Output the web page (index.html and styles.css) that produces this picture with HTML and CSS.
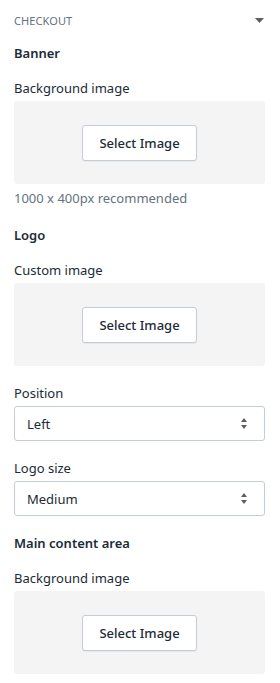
FILE: index.html
```html
<!doctype html>
<html lang="en">
<head>
  <meta charset="utf-8" />
  <meta name="viewport" content="width=device-width,initial-scale=1" />
  <title>Checkout settings</title>
  <link rel="stylesheet" href="styles.css">
</head>
<body>
  <div class="panel">
    <div class="panelHead">
      <span class="panelTitle">CHECKOUT</span>
      <svg class="caret" width="9" height="5" viewBox="0 0 9 5"><path d="M0 0h9L4.5 5z" fill="#5c5f62"/></svg>
    </div>

    <!-- Banner -->
    <h3 class="groupTitle">Banner</h3>
    <div class="field">
      <div class="label">Background image</div>
      <div class="imgPick"><button class="btn" type="button">Select Image</button></div>
      <div class="hint">1000 x 400px recommended</div>
    </div>

    <!-- Logo -->
    <h3 class="groupTitle">Logo</h3>
    <div class="field">
      <div class="label">Custom image</div>
      <div class="imgPick"><button class="btn" type="button">Select Image</button></div>
    </div>
    <div class="field">
      <div class="label">Position</div>
      <div class="select">
        <span>Left</span>
        <svg class="updown" width="6" height="11" viewBox="0 0 6 11"><path d="M3 0L6 4H0z M0 7h6L3 11z" fill="#5c5f62"/></svg>
      </div>
    </div>
    <div class="field">
      <div class="label">Logo size</div>
      <div class="select">
        <span>Medium</span>
        <svg class="updown" width="6" height="11" viewBox="0 0 6 11"><path d="M3 0L6 4H0z M0 7h6L3 11z" fill="#5c5f62"/></svg>
      </div>
    </div>

    <!-- Main content -->
    <h3 class="groupTitle">Main content area</h3>
    <div class="field">
      <div class="label">Background image</div>
      <div class="imgPick"><button class="btn" type="button">Select Image</button></div>
    </div>
  </div>
</body>
</html>
```

FILE: styles.css
```css
:root{
  --font: "Noto Sans", "Open Sans", Arial, sans-serif;
  --ink: #212b36;
  --muted: #637381;
  --line: #c4cdd5;
  --well: #f4f4f4;
}

*{ box-sizing:border-box }
body{ margin:0; font-family:var(--font); background:#fff; color:var(--ink); }

.panel{
  padding: 10px 15px 0 14px;
}

.panelHead{
  display:flex;
  align-items:center;
  justify-content:space-between;
  height:20px;
  padding-right:1px;
}
.panelTitle{
  font-size:11px;
  color: var(--muted);
  letter-spacing:.1px;
}
.caret{ display:block; }

.groupTitle{
  margin:17px 0 0 0;
  font-size:13px;
  line-height:20px;
  font-weight:600;
}
.panelHead + .groupTitle{ margin-top:13px; }

.field{ margin-top:15px; }
.field + .field{ margin-top:17px; }

.label{
  font-size:13px;
  line-height:20px;
  margin-bottom:3px;
}

.imgPick{
  height:83px;
  background: var(--well);
  border-radius:3px;
  display:flex;
  align-items:center;
  justify-content:center;
}

.btn{
  appearance:none;
  width:115px;
  height:36px;
  border:1px solid var(--line);
  border-radius:3px;
  background:#fff;
  font: inherit;
  font-size:13px;
  font-weight:500;
  color: var(--ink);
  box-shadow: 0 1px 0 rgba(22,29,37,.05);
}

.hint{
  margin-top:4px;
  font-size:13px;
  line-height:20px;
  color: var(--muted);
}

.select{
  height:35px;
  border:1px solid var(--line);
  border-radius:3px;
  display:flex;
  align-items:center;
  justify-content:space-between;
  padding: 0 17px 0 12px;
  font-size:13px;
}
.updown{ display:block; }
```
